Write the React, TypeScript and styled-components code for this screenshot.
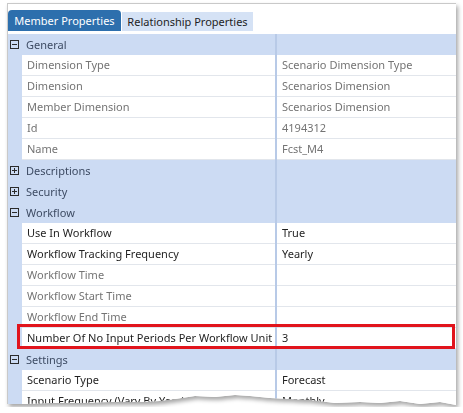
import React from "react";
import styled, { createGlobalStyle } from "styled-components";

const GlobalStyle = createGlobalStyle`
  html, body {
    margin: 0;
    padding: 0;
    background: #ffffff;
    overflow: hidden;
  }
  body {
    font-family: "Noto Sans", "Open Sans", sans-serif;
  }
`;

// torn bottom edge, in panel coordinates (panel sits at 7,3)
const tornEdge = [
  [0, 0], [449, 0], [449, 402], [433, 399], [413, 401], [393, 398], [373, 400],
  [353, 399], [328, 400], [303, 397], [283, 396], [263, 395], [243, 393],
  [228, 392], [208, 394], [188, 393], [168, 396], [153, 398], [133, 399],
  [103, 399], [73, 400], [43, 400], [18, 401], [0, 401],
]
  .map(([x, y]) => `${x}px ${y}px`)
  .join(", ");

const Shadow = styled.div`
  margin: 3px 0 0 7px;
  width: 450px;
  filter: drop-shadow(2px 3px 2px rgba(0, 0, 0, 0.35));
`;

const Panel = styled.div`
  background: #ffffff;
  border: 1px solid #c9c9c9;
  box-sizing: border-box;
  height: 404px;
  overflow: hidden;
  clip-path: polygon(${tornEdge});
`;

const TabBar = styled.div`
  display: flex;
  gap: 1px;
  box-sizing: border-box;
  padding-top: 6px;
  height: 27px;
  align-items: flex-end;
`;

interface TabProps {
  $active?: boolean;
}

const Tab = styled.div<TabProps>`
  height: ${(p) => (p.$active ? "21px" : "19px")};
  width: ${(p) => (p.$active ? "113px" : "131px")};
  display: flex;
  align-items: center;
  justify-content: center;
  font-size: 11px;
  color: ${(p) => (p.$active ? "#ffffff" : "#1e1e1e")};
  background: ${(p) => (p.$active ? "#2d6fad" : "#d5e2f5")};
  border-radius: ${(p) => (p.$active ? "4px 4px 0 0" : "0")};
  box-sizing: border-box;
`;

const Grid = styled.div`
  margin-top: 3px;
  display: flex;
  flex-direction: column;
`;

const Row = styled.div<{ $highlight?: boolean }>`
  position: relative;
  display: grid;
  grid-template-columns: 14px 253px 2px 1fr;
  height: 21px;
  font-size: 11px;
  line-height: 20px;

  ${(p) =>
    p.$highlight &&
    `
    &::after {
      content: "";
      position: absolute;
      left: 9px;
      right: 1px;
      top: -4px;
      bottom: 0px;
      border: 3px solid #e1141c;
      pointer-events: none;
    }
  `}
`;

const Indent = styled.div`
  background: #ccdbf3;
`;

const SectionLabel = styled.div`
  grid-column: 1 / 3;
  background: #ccdbf3;
  display: flex;
  align-items: center;
  gap: 7px;
  padding-left: 2px;
  color: #3d4b63;
`;

const Divider = styled.div`
  background: #b8cae7;
`;

const SectionFill = styled.div`
  background: #ccdbf3;
`;

interface CellProps {
  $muted?: boolean;
}

const Cell = styled.div<CellProps>`
  background: #ffffff;
  border-bottom: 1px solid #e2e6ec;
  padding-left: 5px;
  color: ${(p) => (p.$muted ? "#747474" : "#1f1f1f")};
  white-space: nowrap;
  overflow: hidden;
`;

const ToggleBox = styled.span`
  width: 9px;
  height: 9px;
  box-sizing: border-box;
  border: 1px solid #2b2b2b;
  display: inline-flex;
  align-items: center;
  justify-content: center;
  flex-shrink: 0;
`;

const Toggle: React.FC<{ open: boolean }> = ({ open }) => (
  <ToggleBox>
    <svg width="7" height="7" viewBox="0 0 7 7">
      <rect x="1" y="3" width="5" height="1" fill="#2b2b2b" />
      {!open && <rect x="3" y="1" width="1" height="5" fill="#2b2b2b" />}
    </svg>
  </ToggleBox>
);

interface Item {
  label: string;
  value?: string;
  muted?: boolean;
  highlight?: boolean;
}

interface Section {
  title: string;
  open: boolean;
  items: Item[];
}

const sections: Section[] = [
  {
    title: "General",
    open: true,
    items: [
      { label: "Dimension Type", value: "Scenario Dimension Type", muted: true },
      { label: "Dimension", value: "Scenarios Dimension", muted: true },
      { label: "Member Dimension", value: "Scenarios Dimension", muted: true },
      { label: "Id", value: "4194312", muted: true },
      { label: "Name", value: "Fcst_M4", muted: true },
    ],
  },
  { title: "Descriptions", open: false, items: [] },
  { title: "Security", open: false, items: [] },
  {
    title: "Workflow",
    open: true,
    items: [
      { label: "Use In Workflow", value: "True" },
      { label: "Workflow Tracking Frequency", value: "Yearly" },
      { label: "Workflow Time", muted: true },
      { label: "Workflow Start Time", muted: true },
      { label: "Workflow End Time", muted: true },
      {
        label: "Number Of No Input Periods Per Workflow Unit",
        value: "3",
        highlight: true,
      },
    ],
  },
  {
    title: "Settings",
    open: true,
    items: [
      { label: "Scenario Type", value: "Forecast" },
      { label: "Input Frequency (Vary By Year)", value: "Monthly" },
    ],
  },
];

const App: React.FC = () => {
  return (
    <>
      <GlobalStyle />
      <Shadow>
        <Panel>
          <TabBar>
            <Tab $active>Member Properties</Tab>
            <Tab>Relationship Properties</Tab>
          </TabBar>
          <Grid>
            {sections.map((section) => (
              <React.Fragment key={section.title}>
                <Row>
                  <SectionLabel>
                    <Toggle open={section.open} />
                    {section.title}
                  </SectionLabel>
                  <Divider />
                  <SectionFill />
                </Row>
                {section.items.map((item) => (
                  <Row key={item.label} $highlight={item.highlight}>
                    <Indent />
                    <Cell $muted={item.muted}>{item.label}</Cell>
                    <Divider />
                    <Cell $muted={item.muted}>{item.value}</Cell>
                  </Row>
                ))}
              </React.Fragment>
            ))}
          </Grid>
        </Panel>
      </Shadow>
    </>
  );
};

export default App;
